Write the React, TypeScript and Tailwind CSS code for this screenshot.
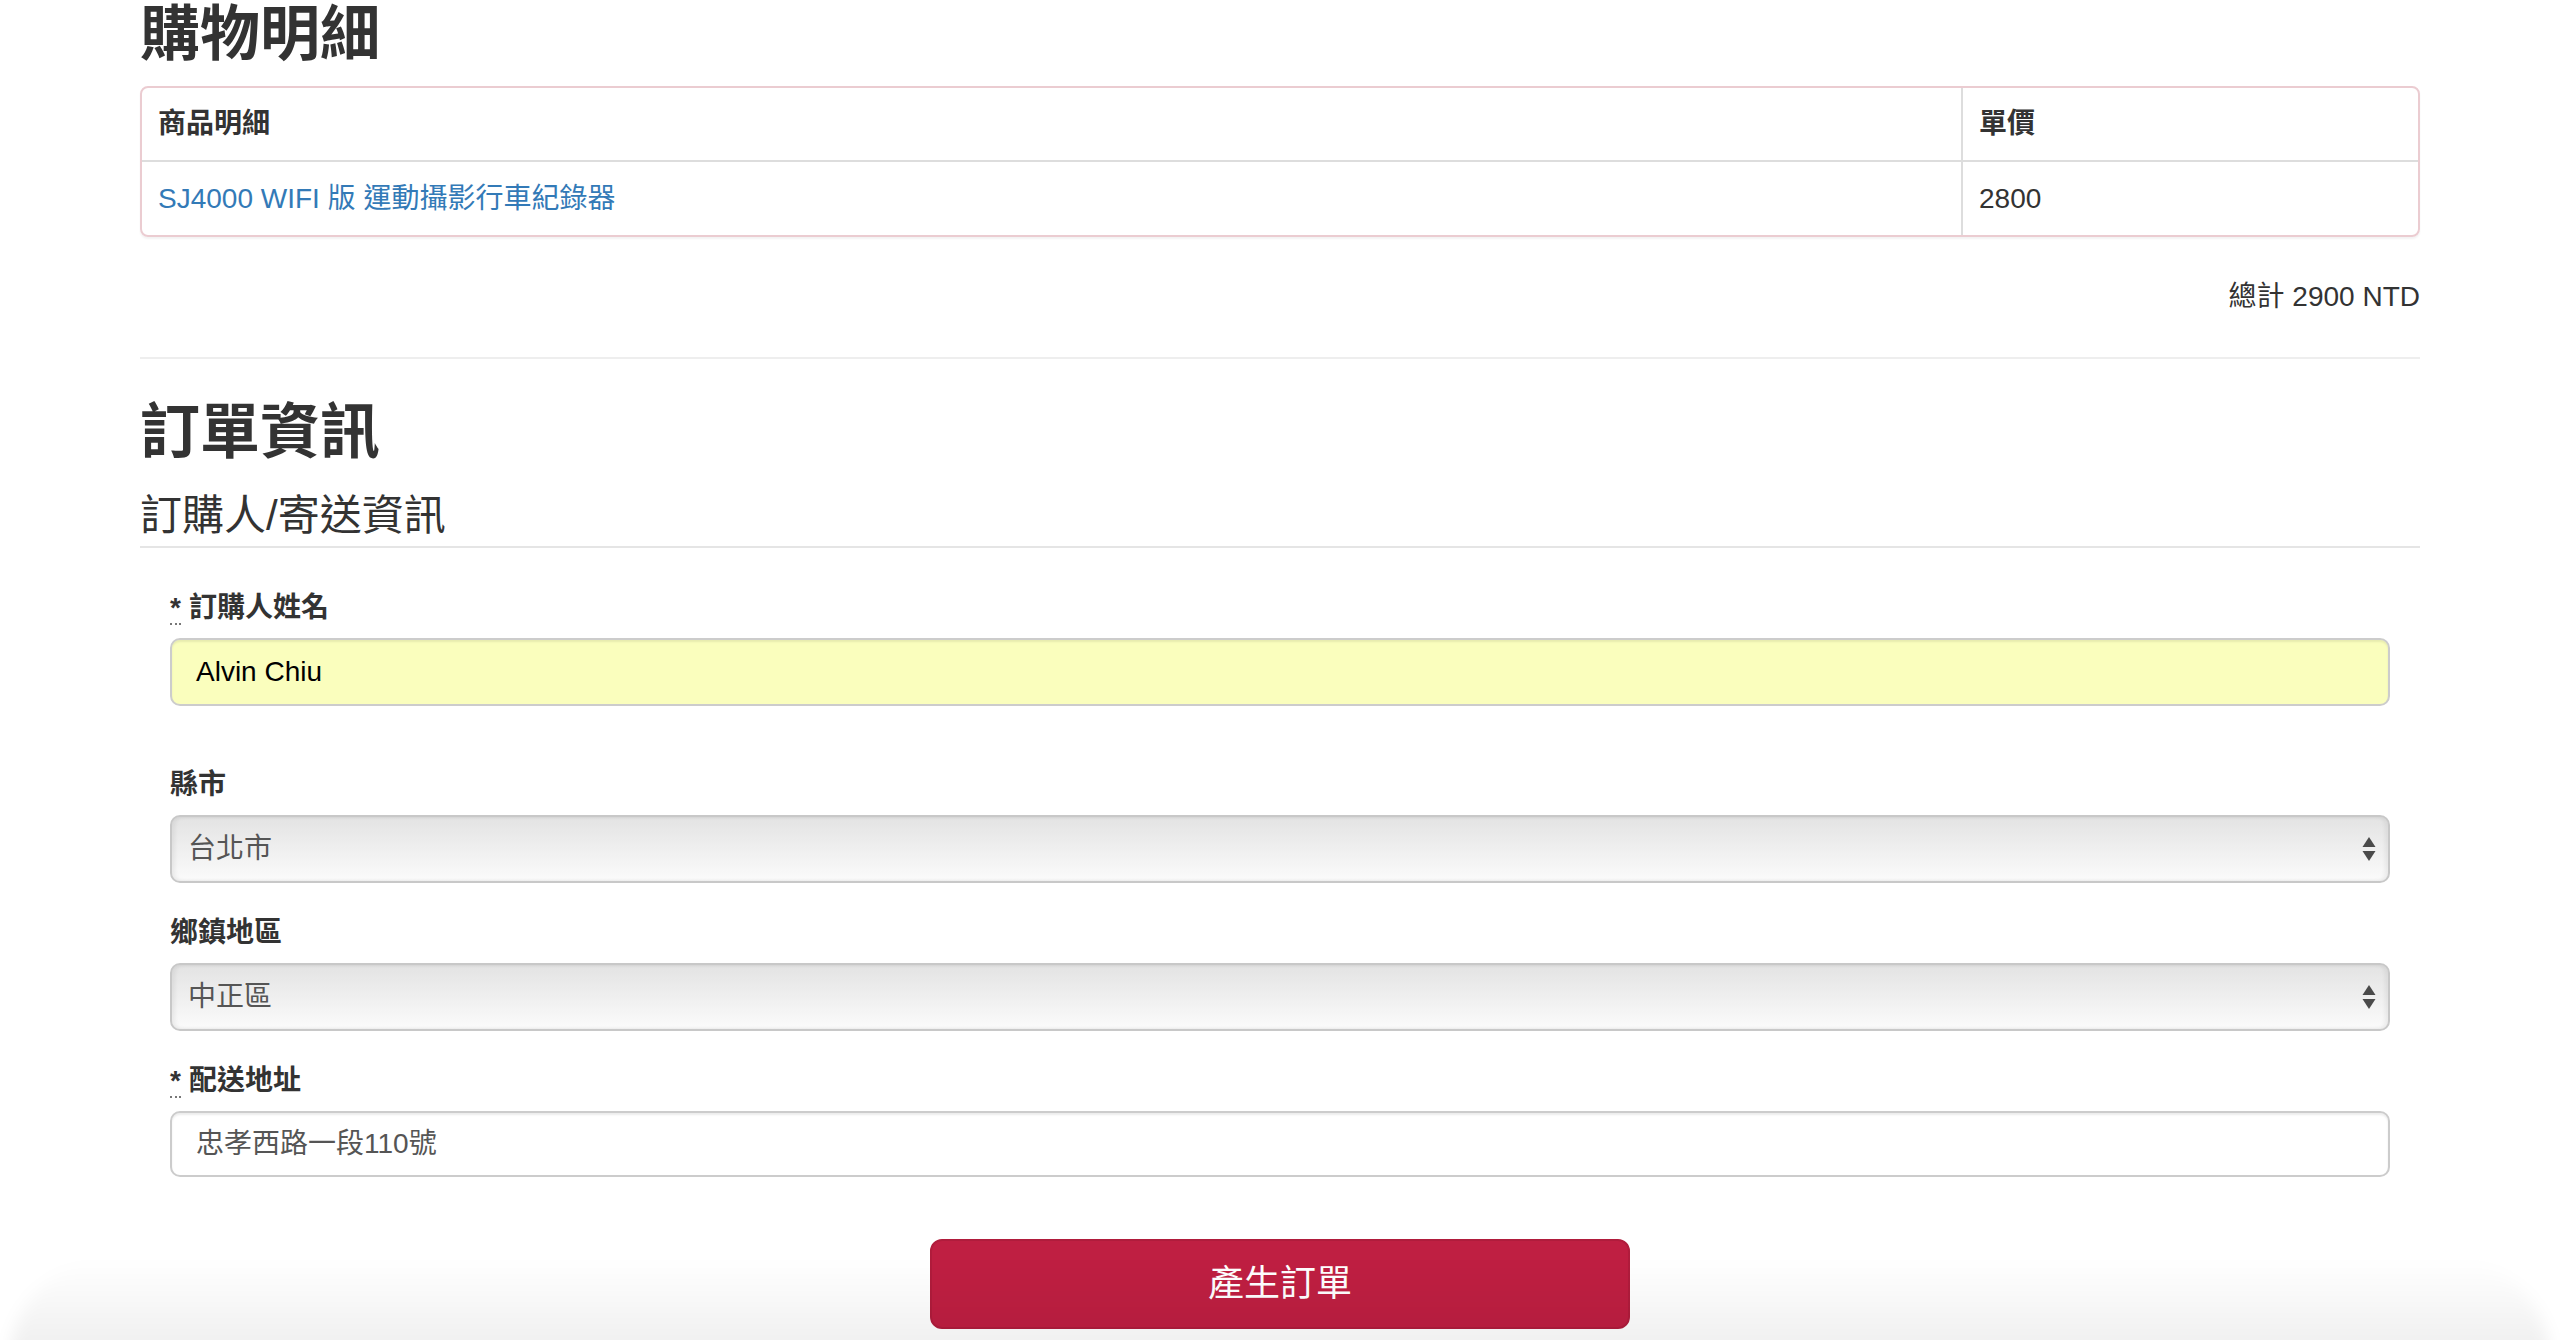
import React from "react";

const FONT = "font-['Liberation_Sans','Noto_Sans_CJK_TC',sans-serif]";

function Arrows() {
  return (
    <svg width="14" height="26" viewBox="0 0 14 26" className="shrink-0">
      <polygon points="7,1 13.5,11 0.5,11" fill="#4a4a4a" />
      <polygon points="0.5,15 13.5,15 7,25" fill="#4a4a4a" />
    </svg>
  );
}

function Label({ required, children }: { required?: boolean; children: React.ReactNode }) {
  return (
    <div className="h-[40px] leading-[40px] text-[28px] font-bold text-[#333] mb-[10px]">
      {required && (
        <abbr title="required" className="no-underline border-b-2 border-dotted border-[#777] mr-[8px]">
          *
        </abbr>
      )}
      {children}
    </div>
  );
}

function FakeSelect({ value }: { value: string }) {
  return (
    <div className="h-[68px] rounded-[10px] border-2 border-[#c8c8c8] bg-[linear-gradient(to_bottom,#e3e3e3,#fbfbfb)] shadow-[inset_3px_0_4px_rgba(0,0,0,0.06),inset_-3px_0_4px_rgba(0,0,0,0.06)] flex items-center justify-between pl-[16px] pr-[12px]">
      <span className="text-[28px] text-[#555]">{value}</span>
      <Arrows />
    </div>
  );
}

export default function App() {
  return (
    <div className={`${FONT} relative min-h-[1340px] bg-white text-[#333] overflow-hidden`}>
      <div className="w-[2280px] mx-auto">
        <h2 className="pt-[4px] text-[60px] leading-[62px] font-bold mb-[20px]">購物明細</h2>

        <div className="rounded-[8px] border-2 border-[#ebccd1] shadow-[0_2px_2px_rgba(0,0,0,0.05)] overflow-hidden">
          <div className="flex border-b-2 border-[#ddd]">
            <div className="w-[1821px] border-r-2 border-[#ddd] px-[16px] py-[16px] text-[28px] leading-[40px] font-bold">
              商品明細
            </div>
            <div className="flex-1 px-[16px] py-[16px] text-[28px] leading-[40px] font-bold">單價</div>
          </div>
          <div className="flex">
            <div className="w-[1821px] border-r-2 border-[#ddd] px-[16px] py-[16px] text-[28px] leading-[41px]">
              <a className="text-[#337ab7]">SJ4000 WIFI 版 運動攝影行車紀錄器</a>
            </div>
            <div className="flex-1 px-[16px] py-[16px] text-[28px] leading-[41px]">2800</div>
          </div>
        </div>

        <div className="mt-[40px] text-right text-[28px] leading-[40px]">總計 2900 NTD</div>

        <div className="mt-[40px] h-[2px] bg-[#eee]" />

        <h2 className="mt-[41px] text-[60px] leading-[66px] font-bold mb-[20px]">訂單資訊</h2>
        <div className="text-[42px] leading-[60px] border-b-2 border-[#e5e5e5] mb-[40px]">訂購人/寄送資訊</div>

        <div className="px-[30px]">
          <Label required>訂購人姓名</Label>
          <div className="h-[68px] rounded-[10px] border-2 border-[#ccc] bg-[#fafebd] shadow-[inset_0_2px_2px_rgba(0,0,0,0.075)] flex items-center px-[24px] text-[28px] text-black">
            Alvin Chiu
          </div>

          <div className="mt-[59px]">
            <Label>縣市</Label>
            <FakeSelect value="台北市" />
          </div>

          <div className="mt-[30px]">
            <Label>鄉鎮地區</Label>
            <FakeSelect value="中正區" />
          </div>

          <div className="mt-[30px]">
            <Label required>配送地址</Label>
            <div className="h-[66px] rounded-[10px] border-2 border-[#ccc] bg-white shadow-[inset_0_2px_2px_rgba(0,0,0,0.075)] flex items-center px-[24px] text-[28px] text-[#555]">
              忠孝西路一段110號
            </div>
          </div>
        </div>

        <div className="mt-[62px] flex justify-center">
          <button className="w-[700px] h-[90px] rounded-[12px] bg-[#bf1f42] border-2 border-[#b01c3c] text-white text-[36px]">
            產生訂單
          </button>
        </div>
      </div>

      <div className="absolute bottom-[-20px] left-[10px] right-[10px] h-[100px] rounded-t-[140px] bg-[linear-gradient(to_bottom,rgba(0,0,0,0),rgba(0,0,0,0.07))] blur-[8px] pointer-events-none" />
    </div>
  );
}
